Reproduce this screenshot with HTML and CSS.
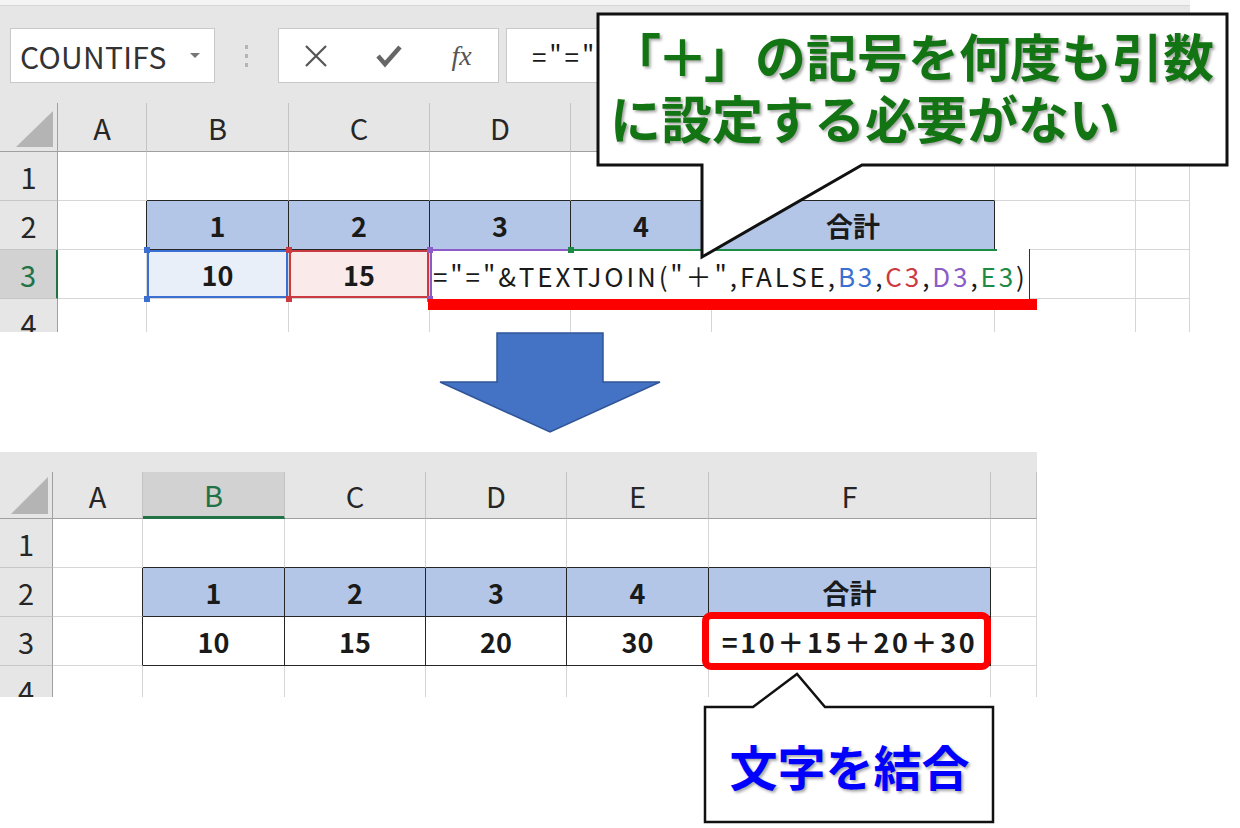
FILE: index.html
```html
<!DOCTYPE html>
<html lang="ja">
<head>
    <meta charset="UTF-8">
    <title>TEXTJOIN で式を作る</title>
    <link rel="stylesheet" href="styles.css">
</head>
<body>
<div class="page">

    <!-- Before: editing the formula -->
    <section class="sheet sheet-top">
        <div class="ribbon">
            <div class="strip"></div>
            <div class="fbar">
                <div class="namebox">COUNTIFS<span class="caret"></span></div>
                <div class="grip"><span></span><span></span><span></span></div>
                <div class="fbtns">
                    <svg width="24" height="22" viewBox="0 0 24 22"><path d="M2 1 L22 21 M22 1 L2 21" stroke="#555" stroke-width="2.2" fill="none"/></svg>
                    <svg width="28" height="24" viewBox="0 0 28 24"><path d="M3 12 L10 20 L25 3" stroke="#666" stroke-width="4.5" fill="none"/></svg>
                    <span class="fx">fx</span>
                </div>
                <div class="finput">="="</div>
            </div>
        </div>

        <div class="grid grid-top">
            <div class="cell hd corner"><svg width="37" height="36" viewBox="0 0 37 36"><polygon points="37,0 37,36 0,36" fill="#b4b4b4"/></svg></div>
            <div class="cell hd">A</div>
            <div class="cell hd">B</div>
            <div class="cell hd">C</div>
            <div class="cell hd">D</div>
            <div class="cell hd"></div>
            <div class="cell hd"></div>
            <div class="cell hd"></div>
            <div class="cell hd"></div>

            <div class="cell rh">1</div>
            <div class="cell"></div>
            <div class="cell above"></div>
            <div class="cell above"></div>
            <div class="cell above"></div>
            <div class="cell above"></div>
            <div class="cell above"></div>
            <div class="cell"></div>
            <div class="cell"></div>

            <div class="cell rh">2</div>
            <div class="cell before"></div>
            <div class="cell tb">1</div>
            <div class="cell tb">2</div>
            <div class="cell tb">3</div>
            <div class="cell tb">4</div>
            <div class="cell tb">合計</div>
            <div class="cell"></div>
            <div class="cell"></div>

            <div class="cell rh on">3</div>
            <div class="cell"></div>
            <div class="cell ref-b">10</div>
            <div class="cell ref-c">15</div>
            <div class="cell"></div>
            <div class="cell"></div>
            <div class="cell"></div>
            <div class="cell"></div>
            <div class="cell"></div>

            <div class="cell rh">4</div>
            <div class="cell"></div>
            <div class="cell"></div>
            <div class="cell"></div>
            <div class="cell"></div>
            <div class="cell"></div>
            <div class="cell"></div>
            <div class="cell"></div>
            <div class="cell"></div>
        </div>

        <!-- cell editor and reference handles -->
        <div class="editor">="="&amp;TEXTJOIN("＋",FALSE,<span class="ref1">B3</span>,<span class="ref2">C3</span>,<span class="ref3">D3</span>,<span class="ref4">E3</span>)</div>
        <span class="hdl blue" style="left:144px;top:247px"></span>
        <span class="hdl blue" style="left:144px;top:296px"></span>
        <span class="hdl red" style="left:286px;top:247px"></span>
        <span class="hdl red" style="left:286px;top:296px"></span>
        <span class="hdl purple" style="left:427px;top:247px"></span>
        <span class="hdl purple" style="left:427px;top:296px"></span>
        <span class="hdl green" style="left:568px;top:247px"></span>
        <div class="underline"></div>
    </section>

    <div class="arrow">
        <svg width="224" height="102" viewBox="0 0 224 102"><polygon points="59,1 165,1 165,50 222,50 112,100 2,50 59,50" fill="#4472c4" stroke="#2f5597" stroke-width="1.5"/></svg>
    </div>

    <!-- After: result -->
    <section class="sheet sheet-bottom">
        <div class="band"></div>
        <div class="grid grid-bottom">
            <div class="cell hd corner"><svg width="37" height="37" viewBox="0 0 37 37"><polygon points="37,0 37,37 0,37" fill="#b4b4b4"/></svg></div>
            <div class="cell hd">A</div>
            <div class="cell hd on">B</div>
            <div class="cell hd">C</div>
            <div class="cell hd">D</div>
            <div class="cell hd">E</div>
            <div class="cell hd">F</div>
            <div class="cell hd"></div>

            <div class="cell rh">1</div>
            <div class="cell"></div>
            <div class="cell above"></div>
            <div class="cell above"></div>
            <div class="cell above"></div>
            <div class="cell above"></div>
            <div class="cell above"></div>
            <div class="cell"></div>

            <div class="cell rh">2</div>
            <div class="cell before"></div>
            <div class="cell tb">1</div>
            <div class="cell tb">2</div>
            <div class="cell tb">3</div>
            <div class="cell tb">4</div>
            <div class="cell tb">合計</div>
            <div class="cell"></div>

            <div class="cell rh">3</div>
            <div class="cell before"></div>
            <div class="cell tw">10</div>
            <div class="cell tw">15</div>
            <div class="cell tw">20</div>
            <div class="cell tw">30</div>
            <div class="cell tw sum">=10＋15＋20＋30</div>
            <div class="cell"></div>

            <div class="cell rh">4</div>
            <div class="cell"></div>
            <div class="cell"></div>
            <div class="cell"></div>
            <div class="cell"></div>
            <div class="cell"></div>
            <div class="cell"></div>
            <div class="cell"></div>
        </div>
        <div class="result"></div>
    </section>

    <!-- callouts -->
    <div class="callout callout-top">
        <svg width="634" height="248" viewBox="0 0 634 248"><path d="M2 2 H631 V153 H266 L106 245 V153 H2 Z" fill="#fff" stroke="#111" stroke-width="3"/></svg>
        <div class="msg"><span class="tight">「＋」</span>の記号を何度も引数<br>に設定する必要がない</div>
    </div>

    <div class="callout callout-bottom">
        <svg width="293" height="153" viewBox="0 0 293 153"><path d="M2 35 H50 L94 2 L122 35 H290 V150 H2 Z" fill="#fff" stroke="#111" stroke-width="2.5"/></svg>
        <div class="msg">文字を結合</div>
    </div>

</div>
</body>
</html>
```

FILE: styles.css
```css
* {
    box-sizing: border-box;
}
body {
    margin: 0;
    background-color: #fff;
    font-family: "Noto Sans CJK JP", sans-serif;
    color: #1a1a1a;
}
.page {
    position: relative;
    width: 1240px;
    height: 828px;
    overflow: hidden;
}

/* sheets */
.sheet {
    position: relative;
    overflow: hidden;
}
.sheet-top {
    width: 1190px;
    height: 332px;
}
.sheet-bottom {
    width: 1037px;
    height: 245px;
}
.band {
    height: 20px;
    background-color: #e6e6e6;
}

/* formula bar */
.ribbon {
    height: 103px;
    background-color: #e6e6e6;
}
.strip {
    height: 6px;
    background-color: #f4f4f4;
    border-bottom: 1px solid #d6d6d6;
}
.fbar {
    display: flex;
    height: 55px;
    margin-top: 22px;
    padding-left: 10px;
}
.namebox {
    width: 205px;
    display: flex;
    align-items: center;
    padding-left: 9px;
    background-color: #fff;
    border: 1px solid #c9c9c9;
    font-size: 30px;
    letter-spacing: 0.3px;
    color: #333;
}
.caret {
    margin-left: auto;
    margin-right: 14px;
    border-left: 5px solid transparent;
    border-right: 5px solid transparent;
    border-top: 5px solid #777;
}
.grip {
    width: 63px;
    display: flex;
    flex-direction: column;
    align-items: center;
    justify-content: center;
    gap: 5px;
}
.grip span {
    width: 3px;
    height: 4px;
    background-color: #b5b5b5;
}
.fbtns {
    width: 221px;
    display: grid;
    grid-template-columns: repeat(3, 1fr);
    align-items: center;
    justify-items: center;
    background-color: #fff;
    border: 1px solid #c9c9c9;
}
.fx {
    font: italic 28px "Liberation Serif", serif;
    color: #555;
}
.finput {
    flex: 1;
    margin: 0 10px 0 7px;
    padding-left: 25px;
    display: flex;
    align-items: center;
    background-color: #fff;
    border: 1px solid #c9c9c9;
    font-size: 26px;
    letter-spacing: 2.9px;
    white-space: nowrap;
}

/* grid */
.grid {
    display: grid;
}
.grid-top {
    grid-template-columns: 58px 89px 142px 141px 141px 141px 283px 141px 54px;
    grid-template-rows: repeat(5, 49px);
}
.grid-bottom {
    grid-template-columns: 53px 90px 142px 141px 141px 142px 282px 46px;
    grid-template-rows: 47px repeat(4, 49px);
}
.cell {
    display: flex;
    align-items: center;
    justify-content: center;
    border-right: 1px solid #d6d6d6;
    border-bottom: 1px solid #d6d6d6;
    font-size: 27px;
    font-weight: 700;
    white-space: nowrap;
}
.hd {
    background-color: #e6e6e6;
    border-right-color: #c3c3c3;
    border-bottom-color: #a0a0a0;
    font-size: 29px;
    font-weight: 400;
    color: #262626;
}
.rh {
    background-color: #e6e6e6;
    border-right-color: #a0a0a0;
    border-bottom-color: #c6c6c6;
    font-size: 29px;
    font-weight: 400;
    color: #262626;
}
.corner {
    justify-content: flex-end;
    align-items: flex-end;
    padding: 0 4px 4px 0;
    border-right-color: #a0a0a0;
}
.hd.on {
    background-color: #d2d2d2;
    color: #217346;
    border-bottom: 3px solid #217346;
}
.rh.on {
    background-color: #d2d2d2;
    color: #217346;
    border-right: 2px solid #217346;
}
.above {
    border-bottom-color: #262626;
}
.before {
    border-right-color: #262626;
}
.tb {
    background-color: #b4c6e7;
    border-color: #262626;
}
.tw {
    border-color: #262626;
}
.sum {
    letter-spacing: 2.6px;
}
.ref-b {
    background-color: #e9eff9;
    box-shadow: inset 0 0 0 2px #3b6fd1;
}
.ref-c {
    background-color: #faeaea;
    box-shadow: inset 0 0 0 2px #cc3a41;
}

/* cell editor */
.editor {
    position: absolute;
    left: 430px;
    top: 249px;
    width: 600px;
    height: 50px;
    display: flex;
    align-items: center;
    padding: 2px 0 0 1px;
    background: #fff linear-gradient(to right, #8b5cc7 141px, #1d8a45 141px, #1d8a45 565px, transparent 565px) top left / 100% 2px no-repeat;
    border-left: 2px solid #8b5cc7;
    border-right: 1px solid #333;
    font-size: 26px;
    letter-spacing: 2.9px;
    white-space: nowrap;
}
.ref1 { color: #3b6fd1; }
.ref2 { color: #cc3a41; }
.ref3 { color: #8b5cc7; }
.ref4 { color: #1d8a45; }
.hdl {
    position: absolute;
    width: 6px;
    height: 6px;
}
.hdl.blue { background-color: #3b6fd1; }
.hdl.red { background-color: #cc3a41; }
.hdl.purple { background-color: #8b5cc7; }
.hdl.green { background-color: #1d8a45; }
.underline {
    position: absolute;
    left: 428px;
    top: 299px;
    width: 609px;
    height: 11px;
    background-color: #ff0000;
}

/* arrow */
.arrow {
    height: 120px;
    padding-left: 438px;
}
.arrow svg {
    display: block;
}

/* result highlight */
.result {
    position: absolute;
    left: 702px;
    top: 160px;
    width: 289px;
    height: 58px;
    border: 7px solid #ff0000;
    border-radius: 9px;
}

/* callouts */
.callout {
    position: absolute;
}
.callout svg {
    position: absolute;
    left: 0;
    top: 0;
}
.callout .msg {
    position: relative;
    font-weight: 700;
    white-space: nowrap;
}
.callout-top {
    left: 596px;
    top: 12px;
    width: 634px;
    height: 248px;
}
.callout-top .msg {
    padding: 12px 0 0 14px;
    font-size: 51px;
    line-height: 62px;
    color: #137413;
    text-shadow: 2px 2px 3px rgba(0, 0, 0, 0.35);
}
.tight {
    letter-spacing: -4px;
    margin-right: 4px;
}
.callout-bottom {
    left: 703px;
    top: 672px;
    width: 293px;
    height: 153px;
}
.callout-bottom .msg {
    height: 100%;
    display: flex;
    align-items: center;
    justify-content: center;
    padding-top: 33px;
    font-size: 48px;
    color: #0000ff;
    text-shadow: 2px 2px 3px rgba(0, 0, 0, 0.35);
}
```
